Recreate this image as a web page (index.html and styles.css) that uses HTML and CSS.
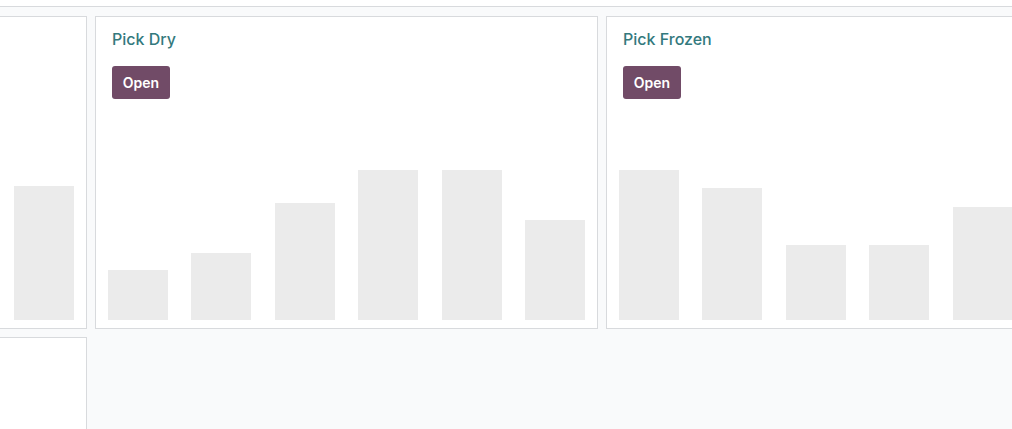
FILE: index.html
```html
<!DOCTYPE html>
<html>
<head>
<meta charset="utf-8">
<link rel="stylesheet" href="styles.css">
</head>
<body>
<div class="topbar"></div>
<div class="board">
  <div class="card">
    <div class="chart">
      <div class="bar" style="height:90px"></div>
      <div class="bar" style="height:110px"></div>
      <div class="bar" style="height:70px"></div>
      <div class="bar" style="height:120px"></div>
      <div class="bar" style="height:100px"></div>
      <div class="bar" style="height:134px"></div>
    </div>
  </div>
  <div class="card">
    <div class="title">Pick Dry</div>
    <div class="actions"><button class="btn">Open</button></div>
    <div class="chart">
      <div class="bar" style="height:50px"></div>
      <div class="bar" style="height:67px"></div>
      <div class="bar" style="height:117px"></div>
      <div class="bar" style="height:150px"></div>
      <div class="bar" style="height:150px"></div>
      <div class="bar" style="height:100px"></div>
    </div>
  </div>
  <div class="card">
    <div class="title">Pick Frozen</div>
    <div class="actions"><button class="btn">Open</button></div>
    <div class="chart">
      <div class="bar" style="height:150px"></div>
      <div class="bar" style="height:132px"></div>
      <div class="bar" style="height:75px"></div>
      <div class="bar" style="height:75px"></div>
      <div class="bar" style="height:113px"></div>
      <div class="bar" style="height:90px"></div>
    </div>
  </div>
  <div class="card"></div>
</div>
</body>
</html>
```
FILE: styles.css
```css
html, body {
  margin: 0;
  padding: 0;
  overflow: hidden;
  height: 100%;
}
body {
  background: #f9fafb;
  font-family: Inter, Roboto, "Liberation Sans", sans-serif;
}
.topbar {
  height: 6px;
  background: #ffffff;
  border-bottom: 1px solid #d8dadd;
}
.board {
  display: grid;
  grid-template-columns: 503px 503px 503px;
  gap: 8px;
  margin-left: -416px;
  padding-top: 9px;
}
.card {
  box-sizing: border-box;
  height: 313px;
  background: #ffffff;
  border: 1px solid #d8dadd;
  padding: 10px 12px 8px 12px;
  display: flex;
  flex-direction: column;
}
.title {
  font-size: 16px;
  line-height: 24px;
  font-weight: 500;
  color: #33797d;
  padding-left: 4px;
}
.actions {
  margin-top: 15px;
  padding-left: 4px;
}
.btn {
  font-family: Inter, Roboto, "Liberation Sans", sans-serif;
  font-size: 14px;
  font-weight: 600;
  line-height: 21px;
  color: #ffffff;
  background: #714b67;
  border: none;
  border-radius: 3px;
  padding: 6px 0;
  height: 33px;
  width: 58px;
}
.chart {
  flex: 1;
  display: flex;
  align-items: flex-end;
  justify-content: space-between;
}
.bar {
  width: 60px;
  background: #ebebeb;
}
```
